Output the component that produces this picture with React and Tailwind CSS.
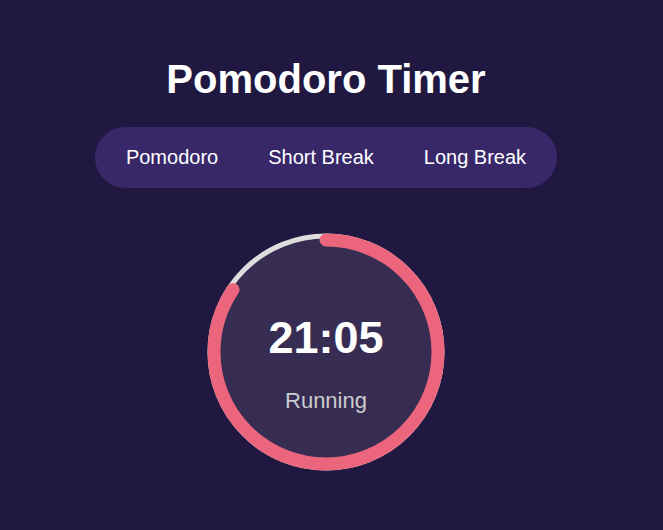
import { useState } from "react";

// ── Progress ring ─────────────────────────────────────────────────────────────
const R = 112;
const CIRC = 2 * Math.PI * R;

const Ring = ({ progress }) => (
  <svg width="240" height="240" viewBox="0 0 240 240" className="block">
    <circle cx="120" cy="120" r="116" fill="#372d53" />
    <circle cx="120" cy="120" r="116" fill="none" stroke="#dddddd" strokeWidth="5" />
    <circle
      cx="120"
      cy="120"
      r={R}
      fill="none"
      stroke="#eb667d"
      strokeWidth="13"
      strokeLinecap="round"
      strokeDasharray={`${CIRC * progress} ${CIRC}`}
      transform="rotate(-90 120 120)"
    />
  </svg>
);

// ── App ───────────────────────────────────────────────────────────────────────
const modes = ["Pomodoro", "Short Break", "Long Break"];

export default function App() {
  const [mode, setMode] = useState("Pomodoro");
  const total = 25 * 60;
  const left  = 21 * 60 + 5;

  return (
    <div className="min-h-screen bg-[#201840] flex flex-col items-center pt-[56px] pr-[11px] font-['Liberation_Sans',Arial,sans-serif]">
      <h1 className="text-[40px] leading-[46px] font-bold text-white">Pomodoro Timer</h1>

      <div className="mt-[25px] flex rounded-full bg-[#382869] p-[6px]">
        {modes.map((m) => (
          <button
            key={m}
            onClick={() => setMode(m)}
            className="px-[25px] py-[13px] text-[20px] leading-[23px] text-white rounded-full"
          >
            {m}
          </button>
        ))}
      </div>

      <div className="relative mt-[44px] w-[240px] h-[240px]">
        <Ring progress={left / total} />
        <div className="absolute inset-0 flex flex-col items-center justify-center pt-[20px]">
          <span className="text-[45px] leading-[52px] font-bold text-white">21:05</span>
          <span className="mt-[24px] text-[22px] leading-[25px] text-[#cccccc]">Running</span>
        </div>
      </div>
    </div>
  );
}
